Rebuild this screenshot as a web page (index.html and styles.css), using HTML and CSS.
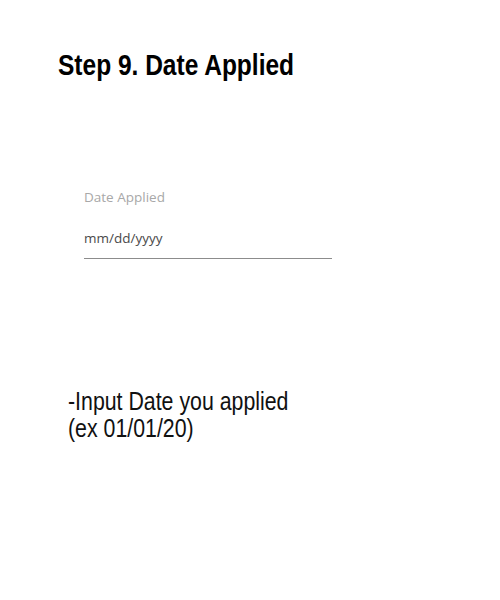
FILE: index.html
```html
<!DOCTYPE html>
<html>
<head>
<meta charset="utf-8">
<link rel="stylesheet" href="styles.css">
</head>
<body>
<div class="page">
  <h1 class="title">Step 9. Date Applied</h1>
  <div class="field">
    <div class="field-label">Date Applied</div>
    <div class="field-input">mm/dd/yyyy</div>
  </div>
  <p class="note">-Input Date you applied<br>(ex 01/01/20)</p>
</div>
</body>
</html>
```
FILE: styles.css
```css
html, body {
  margin: 0;
  padding: 0;
  background: #ffffff;
}
.page {
  width: 500px;
  height: 600px;
  display: flex;
  flex-direction: column;
  box-sizing: border-box;
  padding-top: 47px;
}
.title {
  margin: 0 0 0 58px;
  font-family: "Liberation Sans", Arial, sans-serif;
  font-weight: bold;
  font-size: 30px;
  line-height: 36px;
  color: #000;
  transform: scaleX(0.817);
  transform-origin: left center;
  white-space: nowrap;
}
.field {
  margin: 105px 0 0 84px;
  width: 248px;
  font-family: "Open Sans", sans-serif;
}
.field-label {
  font-size: 13.5px;
  line-height: 18px;
  color: #a8a8a8;
}
.field-input {
  margin-top: 23px;
  font-size: 13.5px;
  line-height: 18px;
  color: #4a4a4a;
  padding-bottom: 11px;
  border-bottom: 1px solid #8c8c8c;
}
.note {
  margin: 129px 0 0 68px;
  font-family: "Liberation Sans", Arial, sans-serif;
  font-size: 26px;
  line-height: 27px;
  color: #111;
  transform: scaleX(0.82);
  transform-origin: left center;
  white-space: nowrap;
}
```
